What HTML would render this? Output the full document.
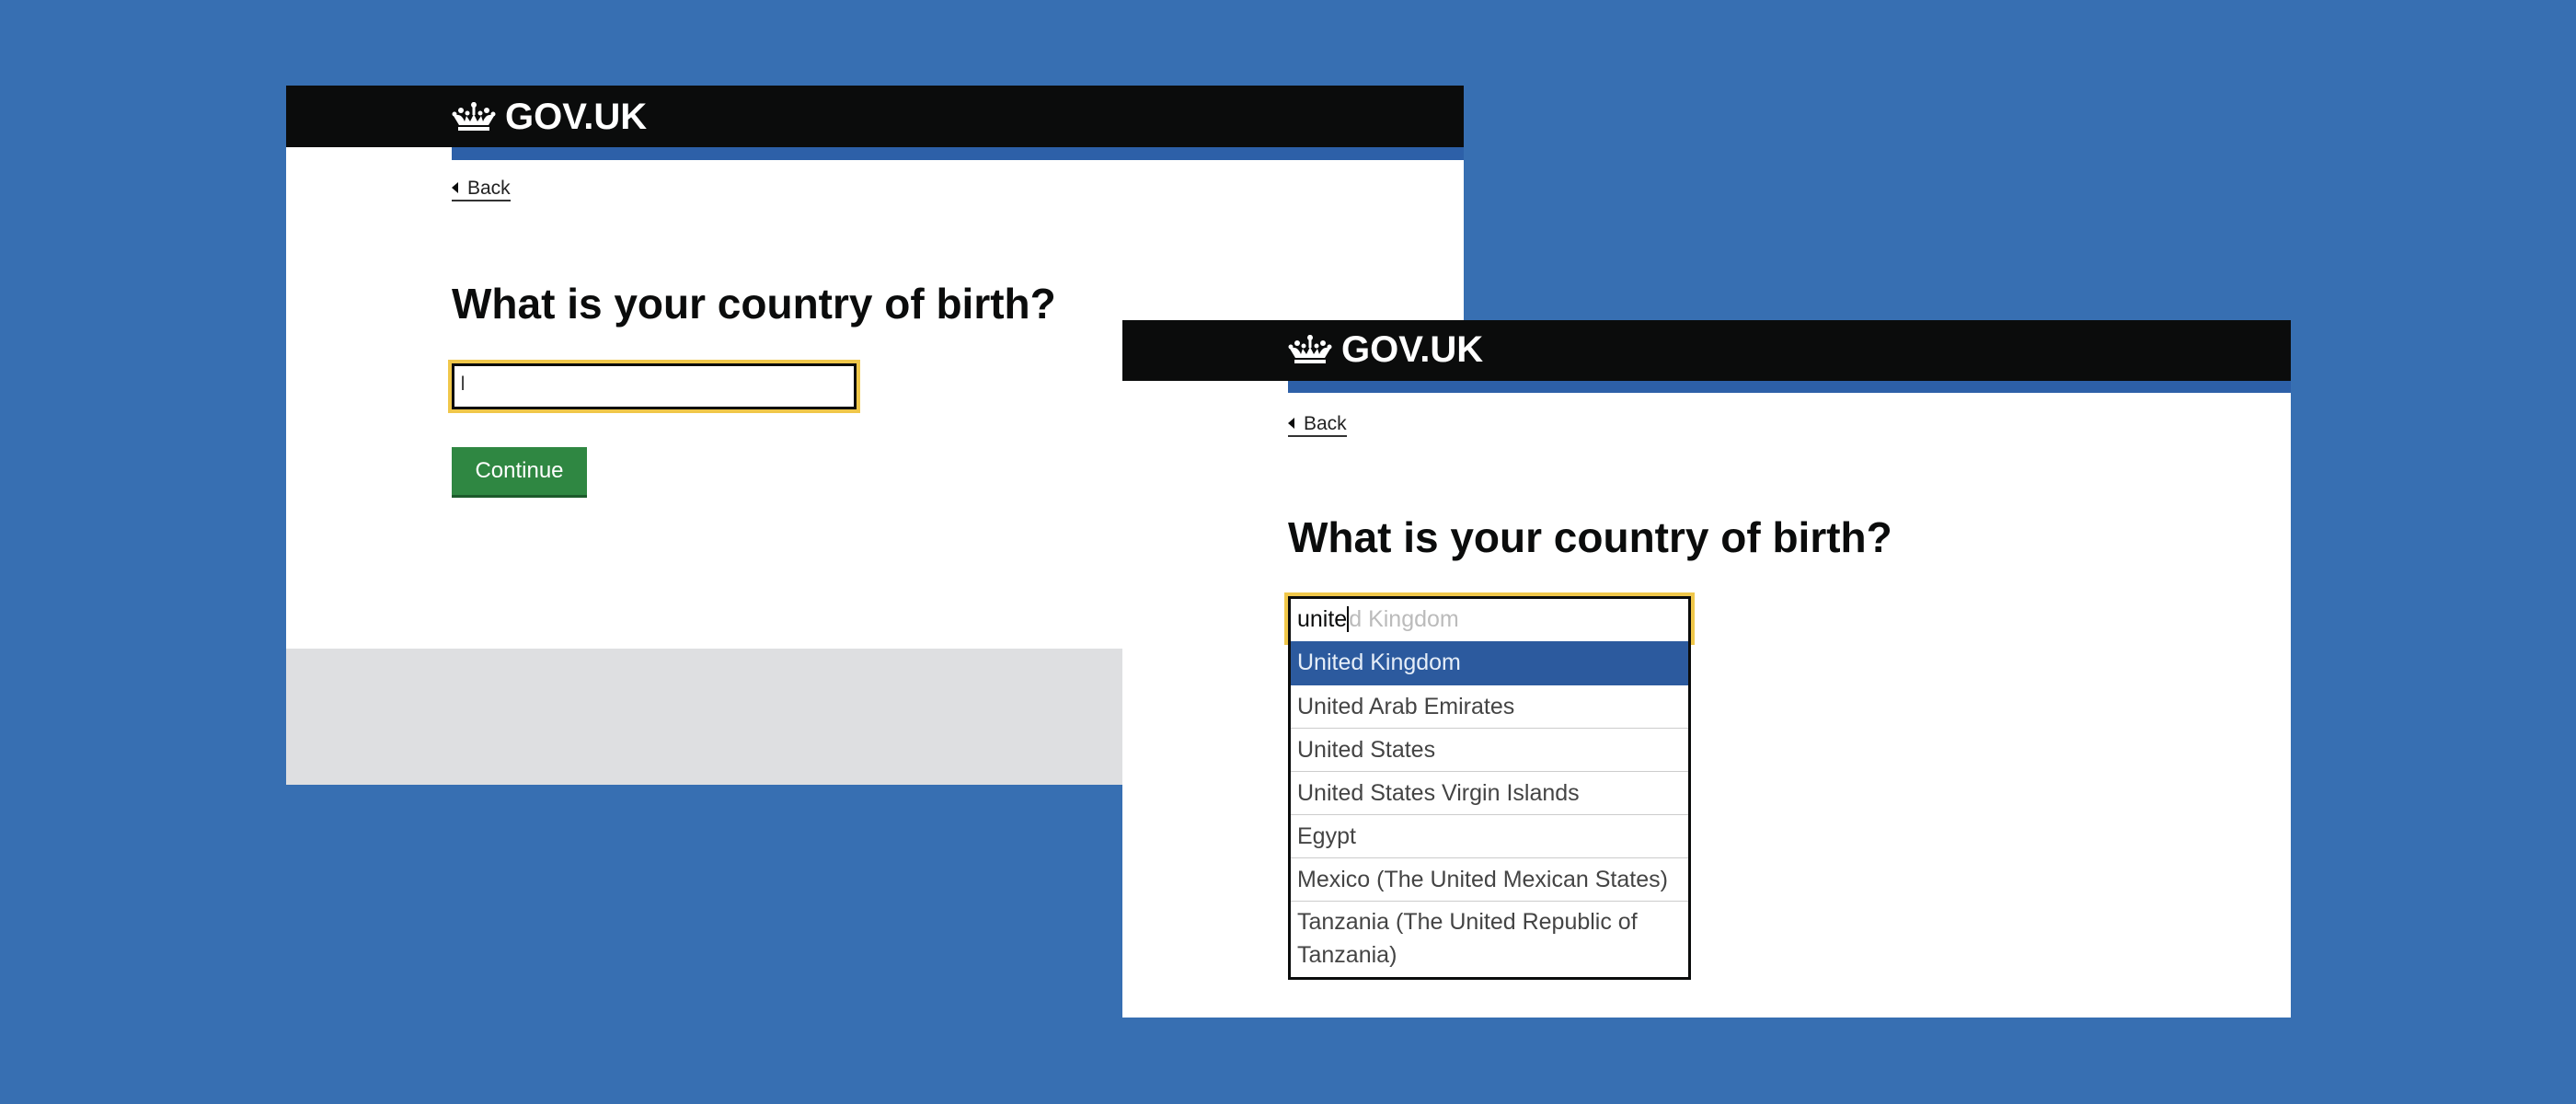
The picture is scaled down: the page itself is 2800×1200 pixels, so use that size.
<!DOCTYPE html>
<html><head><meta charset="utf-8"><style>
*{margin:0;padding:0;box-sizing:border-box}
body{width:2800px;height:1200px;background:#376fb2;position:relative;overflow:hidden;font-family:"Liberation Sans",sans-serif}
.win{position:absolute;background:#fff}
.hdr{position:absolute;left:0;right:0;top:0;background:#0b0c0c}
.bar{position:absolute;right:0;background:#2d60a8}
.logo{position:absolute;color:#fff;font-weight:bold;font-size:40px;display:flex;align-items:center;gap:10px;letter-spacing:0}
.back{position:absolute;font-size:21px;color:#222;border-bottom:2px solid #333;line-height:24px}
.back:before{content:"";display:inline-block;border-right:7px solid #0b0c0c;border-top:6px solid transparent;border-bottom:6px solid transparent;margin-right:10px;vertical-align:1px}
h1{position:absolute;font-size:46px;font-weight:bold;color:#0b0c0c;letter-spacing:0;white-space:nowrap}
.inp{position:absolute;border:3px solid #0b0c0c;outline:4px solid #f0c74a;background:#fff}
.btn{position:absolute;background:#2f8742;color:#fff;font-size:24px;text-align:center;border-bottom:3px solid #1c5a2b}
.dd{position:absolute;border:3px solid #0b0c0c;border-top:none;background:#fff}
.dd div{font-size:25px;color:#444;padding-left:7px;border-bottom:1px solid #ccc;height:47px;line-height:47px;white-space:nowrap}
</style></head><body>
<div class="win" style="left:311px;top:93px;width:1280px;height:760px">
 <div class="hdr" style="height:67px"></div>
 <div class="bar" style="left:180px;top:67px;height:14px"></div>
 <div class="logo" style="left:180px;top:9px;height:50px">
  <svg width="48" height="34" viewBox="0 0 48 34"><g fill="#fff"><circle cx="24" cy="4" r="3"/><rect x="22.5" y="1" width="3" height="14"/><circle cx="10" cy="10" r="3"/><circle cx="38" cy="10" r="3"/><circle cx="3" cy="14" r="2.5"/><circle cx="45" cy="14" r="2.5"/><circle cx="17" cy="13" r="2.5"/><circle cx="31" cy="13" r="2.5"/><path d="M2 16 Q10 12 14 22 L16 16 L20 22 L24 14 L28 22 L32 16 L34 22 Q38 12 46 16 L40 26 L8 26 Z"/><rect x="7" y="28" width="34" height="4"/></g></svg>
  <span>GOV.UK</span></div>
 <div class="back" style="left:180px;top:100px">Back</div>
 <h1 style="left:180px;top:210px">What is your country of birth?</h1>
 <div class="inp" style="left:180px;top:302px;width:440px;height:50px"><span style="position:absolute;left:6px;top:6px;font-size:22px;color:#444">I</span></div>
 <div class="btn" style="left:180px;top:393px;width:147px;height:55px;line-height:52px">Continue</div>
 <div style="position:absolute;left:0;right:0;top:612px;bottom:0;background:#dedfe1"></div>
</div>
<div class="win" style="left:1220px;top:348px;width:1270px;height:758px">
 <div class="hdr" style="height:66px"></div>
 <div class="bar" style="left:180px;top:66px;height:13px"></div>
 <div class="logo" style="left:180px;top:7px;height:50px">
  <svg width="48" height="34" viewBox="0 0 48 34"><g fill="#fff"><circle cx="24" cy="4" r="3"/><rect x="22.5" y="1" width="3" height="14"/><circle cx="10" cy="10" r="3"/><circle cx="38" cy="10" r="3"/><circle cx="3" cy="14" r="2.5"/><circle cx="45" cy="14" r="2.5"/><circle cx="17" cy="13" r="2.5"/><circle cx="31" cy="13" r="2.5"/><path d="M2 16 Q10 12 14 22 L16 16 L20 22 L24 14 L28 22 L32 16 L34 22 Q38 12 46 16 L40 26 L8 26 Z"/><rect x="7" y="28" width="34" height="4"/></g></svg>
  <span>GOV.UK</span></div>
 <div class="back" style="left:180px;top:101px">Back</div>
 <h1 style="left:180px;top:209px">What is your country of birth?</h1>
 <div class="inp" style="left:180px;top:300px;width:438px;height:49px;border-bottom:none"><span style="position:absolute;left:7px;top:8px;font-size:25px;color:#0b0c0c">unite<span style="border-left:2px solid #000"></span><span style="color:#bbb">d Kingdom</span></span></div>
 <div class="dd" style="left:180px;top:349px;width:438px;height:368px">
  <div style="background:#2c5a9e;color:#e6eef8;height:48px;border:none">United Kingdom</div>
  <div>United Arab Emirates</div>
  <div>United States</div>
  <div>United States Virgin Islands</div>
  <div>Egypt</div>
  <div>Mexico (The United Mexican States)</div>
  <div style="height:80px;line-height:36px;padding-top:4px;white-space:normal;border:none">Tanzania (The United Republic of Tanzania)</div>
 </div>
</div>
</body></html>
